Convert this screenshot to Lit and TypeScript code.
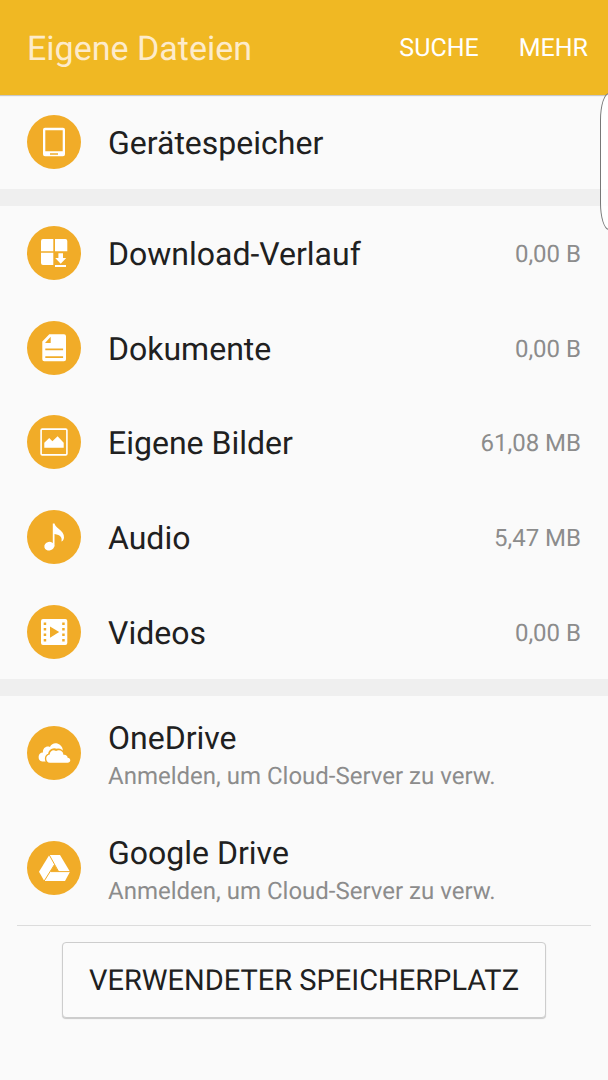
import { LitElement, html, css, svg, TemplateResult, nothing } from "lit";
import { customElement, property } from "lit/decorators.js";

const glyphs: Record<string, TemplateResult> = {
  device: svg`
    <path fill-rule="evenodd" d="M18 12.700h18a2 2 0 0 1 2 2v24.600a2 2 0 0 1-2 2H18a2 2 0 0 1-2-2V14.700a2 2 0 0 1 2-2zM18.300 15.200v21h17.400v-21zM23 38.200v1.600h8v-1.600z"/>`,
  download: svg`
    <path d="M16 13h10.300v12.200H14V15a2 2 0 0 1 2-2zM28 13h10.300a2 2 0 0 1 2 2v10.200H28zM14 26.800h12.300V39H16a2 2 0 0 1-2-2zM31.400 27.300h4.600v4.600h3.200l-5.500 5.800-5.500-5.800h3.200zM28 39h11v2H28z"/>`,
  document: svg`
    <path fill-rule="evenodd" d="M22.300 13.300H37a2 2 0 0 1 2 2v23a2 2 0 0 1-2 2H17.300a2 2 0 0 1-2-2V20.500zM23.700 15.800L18 22h5.700zM18.300 27.600v1.700h17.800v-1.700zM18.300 35.200v1.700h17.800v-1.700z"/>`,
  image: svg`
    <rect x="14.100" y="14.100" width="25.800" height="25.800" rx="1.200" fill="none" stroke="#fff" stroke-width="1.600"/>
    <path d="M17.300 27.800l4.900-4.800 3.200 3.300 5.200-5 6.100 6.400v5.100H17.300z"/>`,
  audio: svg`
    <ellipse cx="22.300" cy="36.200" rx="5" ry="4.300" transform="rotate(-14 22.300 36.200)"/>
    <path d="M25.800 13.600h1.700c.5 2.300 2 3.600 4.100 5.200 3.400 2.500 5.600 5 5.400 8.700-.1 1.900-1 3.400-2.600 4 1-3.600-.6-6.500-6.900-7.500V36.500h-1.700z"/>`,
  video: svg`
    <path fill-rule="evenodd" d="M16 14h22.300a2 2 0 0 1 2 2v22a2 2 0 0 1-2 2H16a2 2 0 0 1-2-2V16a2 2 0 0 1 2-2zM16.700 17.600v2.500h2.500v-2.500zM16.700 23v2.500h2.500V23zM16.700 28.500V31h2.500v-2.500zM16.700 34v2.500h2.500V34zM35.200 17.600v2.500h2.500v-2.500zM35.200 23v2.500h2.500V23zM35.200 28.500V31h2.500v-2.500zM35.200 34v2.500h2.500V34zM23 21.500v11.200l9.200-5.600z"/>`,
  onedrive: svg`
    <path d="M15.300 35.600a4.600 4.600 0 0 1 .6-9.100c-.2-4.600 3.500-7 7-5.600 1.600-3 4.600-4.200 7.500-3.300 3 .9 5.200 3.300 5.400 6.400L34 30 22 35.600z"/>
    <path class="cut" d="M22.900 36.800a4.200 4.200 0 0 1-.4-8.200c.3-4.200 4.100-5.700 7-4.300 3.500-.9 6.700 1.300 6.900 4.200 2.600-.2 4 1.300 4.200 3.200 1.700.1 2.700 1.300 2.700 2.600 0 1.500-1.200 2.500-2.700 2.500z"/>
    <path d="M22.900 36.800a4.200 4.200 0 0 1-.2-8.300c.1-3.600 3.800-5.300 6.300-3.400 3.300-1.900 7.300.1 7.400 3.600 2.600-.4 4.200 1.100 4.200 3 1.700.1 2.700 1.300 2.700 2.600 0 1.500-1.200 2.500-2.700 2.500z"/>`,
  gdrive: svg`
    <path d="M22.300 14H33l10 16.700L38 40H17.300L12 30.700z"/>
    <path class="cut-fill" d="M27.400 23.700l4.200 6.900h-8.300z"/>
    <path class="cut-line" d="M22.300 14l9.300 16.600M43.500 30.600H23.500M17 40.300l10.400-16.600"/>`,
};

@customElement("file-row")
class FileRow extends LitElement {
  @property() icon = "";
  @property() label = "";
  @property() size = "";
  @property() hint = "";

  static styles = css`
    :host { display: block; }
    .row {
      box-sizing: border-box;
      display: flex;
      align-items: center;
      gap: 27px;
      width: 100%;
      height: 100%;
      padding: 0 27px;
      color: #202020;
      text-decoration: none;
    }
    .badge { flex: none; width: 54px; height: 54px; fill: #fff; }
    .disc, .cut-fill { fill: #f1ac28; }
    .cut { fill: #f1ac28; stroke: #f1ac28; stroke-width: 3; }
    .cut-line { fill: none; stroke: #f1ac28; stroke-width: 1; }
    .text { display: grid; flex: 1; min-width: 0; padding-top: 2px; }
    .label { font-size: 32px; line-height: 40px; }
    .hint { font-size: 24px; line-height: 32px; padding-top: 2px; color: #8c8c8c; }
    .size { font-size: 24px; line-height: 32px; padding-top: 2px; color: #8c8c8c; white-space: nowrap; }
    .stacked { padding-top: 4px; }
  `;

  render() {
    return html`
      <a class="row" href="#">
        <svg class="badge" viewBox="0 0 54 54" aria-hidden="true">
          <circle class="disc" cx="27" cy="27" r="27"/>
          ${glyphs[this.icon]}
        </svg>
        <span class="text ${this.hint ? "stacked" : ""}">
          <span class="label">${this.label}</span>
          ${this.hint ? html`<span class="hint">${this.hint}</span>` : nothing}
        </span>
        ${this.size ? html`<span class="size">${this.size}</span>` : nothing}
      </a>`;
  }
}

const categories = [
  { icon: "download", label: "Download-Verlauf", size: "0,00 B" },
  { icon: "document", label: "Dokumente", size: "0,00 B" },
  { icon: "image", label: "Eigene Bilder", size: "61,08 MB" },
  { icon: "audio", label: "Audio", size: "5,47 MB" },
  { icon: "video", label: "Videos", size: "0,00 B" },
];

const clouds = [
  { icon: "onedrive", label: "OneDrive" },
  { icon: "gdrive", label: "Google Drive" },
];

@customElement("app-root")
class AppRoot extends LitElement {
  static styles = css`
    :host {
      display: block;
      position: relative;
      min-height: 100vh;
      overflow: hidden;
      background: #fafafa;
      font-family: Roboto, "Liberation Sans", sans-serif;
      text-rendering: geometricPrecision;
      color: #202020;
    }
    .bar {
      display: flex;
      align-items: center;
      gap: 40px;
      height: 95px;
      box-sizing: border-box;
      padding: 2px 20px 0 27px;
      background: #f0b823;
      box-shadow: 0 1px 1px rgba(0, 0, 0, 0.2);
    }
    .title {
      flex: 1;
      margin: 0;
      font-size: 34px;
      line-height: 40px;
      font-weight: 400;
      color: #fdebcb;
    }
    .action {
      padding: 0;
      border: 0;
      background: none;
      font: 400 25px/32px Roboto, "Liberation Sans", sans-serif;
      text-rendering: inherit;
      color: #fff;
    }
    .group { display: grid; grid-auto-rows: 1fr; }
    .device { min-height: 94px; }
    .categories { min-height: 473px; }
    .clouds { min-height: 229px; }
    .band { height: 17px; background: #efefef; }
    .footer {
      margin: 0 17px;
      padding: 16px 45px 0;
      border-top: 1px solid #dcdcdc;
    }
    .usage {
      width: 100%;
      height: 76px;
      padding: 2px 0 0;
      border: 1px solid #cdcdcd;
      border-radius: 4px;
      background: #fbfbfb;
      box-shadow: 0 1px 1px rgba(0, 0, 0, 0.2);
      font: 400 29px/36px Roboto, "Liberation Sans", sans-serif;
      text-rendering: inherit;
      color: #202020;
    }
    .handle {
      position: absolute;
      top: 93px;
      right: -10px;
      width: 18px;
      height: 137px;
      padding: 0;
      border: 1px solid #777;
      border-radius: 10px / 30px;
      background: rgba(255, 255, 255, 0.85);
    }
  `;

  render() {
    return html`
      <header class="bar">
        <h1 class="title">Eigene Dateien</h1>
        <button class="action">SUCHE</button>
        <button class="action">MEHR</button>
      </header>
      <main>
        <section class="group device">
          <file-row icon="device" label="Gerätespeicher"></file-row>
        </section>
        <div class="band"></div>
        <section class="group categories">
          ${categories.map((c) => html`
            <file-row .icon=${c.icon} .label=${c.label} .size=${c.size}></file-row>`)}
        </section>
        <div class="band"></div>
        <section class="group clouds">
          ${clouds.map((c) => html`
            <file-row .icon=${c.icon} .label=${c.label}
              .hint=${"Anmelden, um Cloud-Server zu verw."}></file-row>`)}
        </section>
        <footer class="footer">
          <button class="usage">VERWENDETER SPEICHERPLATZ</button>
        </footer>
      </main>
      <button class="handle" aria-label="Seitenleiste"></button>`;
  }
}
